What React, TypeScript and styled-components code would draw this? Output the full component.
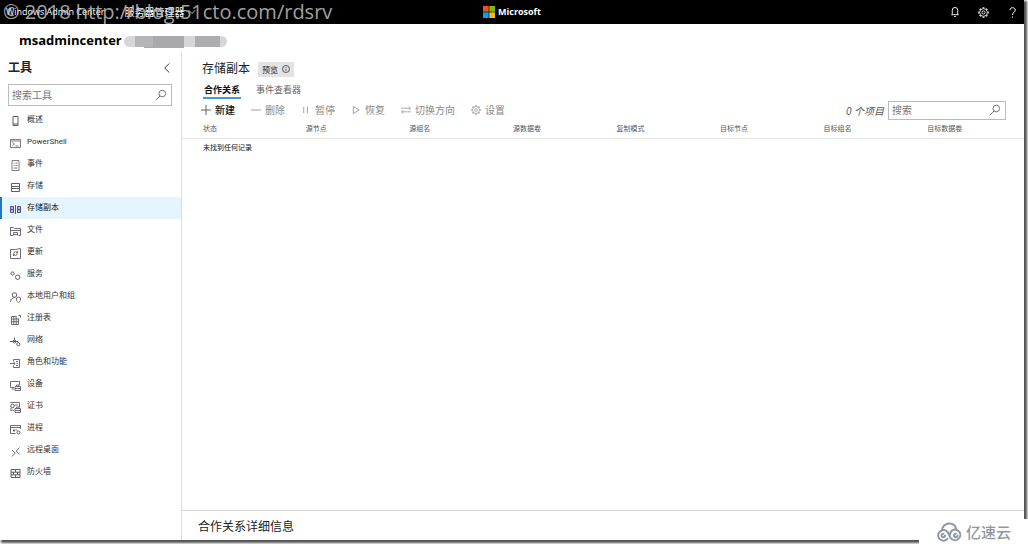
import React from "react";
import styled, { createGlobalStyle, css } from "styled-components";

const GlobalStyle = createGlobalStyle`
  * { box-sizing: border-box; }
  body {
    margin: 0;
    background: #fff;
    color: #222;
    font-family: "Open Sans", "Noto Sans CJK SC", sans-serif;
    font-size: 10px;
  }
  button, input { font: inherit; color: inherit; }
  button { background: none; border: 0; padding: 0; }
  svg { display: block; flex: none; }
`;

const Window = styled.div`
  display: flex;
  flex-direction: column;
  min-height: calc(100vh - 4px);
  margin: 0 4px 4px 0;
  background: #fff;
  box-shadow: 2px 2px 2px 1px #555;
`;

const TopBar = styled.header`
  display: grid;
  grid-template-columns: 1fr auto 1fr;
  align-items: center;
  height: 24px;
  padding: 0 6px;
  background: #000;
  color: #fff;
`;

const Product = styled.div`
  display: flex;
  align-items: center;
  gap: 20px;
  font-size: 9px;
  line-height: 16px;
  white-space: nowrap;
`;

const Module = styled.span`
  display: flex;
  align-items: center;
  gap: 4px;
  font-size: 10px;
`;

const Brand = styled.div`
  display: flex;
  align-items: center;
  gap: 3px;
  font-size: 9px;
  font-weight: 700;
  line-height: 14px;
`;

const TopActions = styled.div`
  display: flex;
  justify-content: flex-end;
  align-items: center;
  gap: 18px;
`;

const IconButton = styled.button`
  display: flex;
`;

const Connection = styled.div`
  display: flex;
  align-items: center;
  height: 29px;
  padding: 4px 0 0 19px;
`;

const ServerName = styled.h1`
  margin: 0;
  padding-bottom: 2px;
  font-size: 13px;
  line-height: 18px;
  font-weight: 700;
  color: #000;
`;

const Redaction = styled.svg`
  margin: 2px 0 0 2px;
`;

const Body = styled.div`
  display: flex;
  flex: 1;
`;

const Sidebar = styled.aside`
  flex: none;
  width: 182px;
  border-right: 1px solid #ddd;
`;

const SidebarHeader = styled.div`
  display: flex;
  align-items: center;
  justify-content: space-between;
  height: 28px;
  padding: 2px 9px 0 8px;
`;

const SidebarTitle = styled.h2`
  margin: 0;
  font-size: 12px;
  font-weight: 700;
  line-height: 16px;
`;

const SearchBox = styled.label<{ $wide?: boolean }>`
  display: flex;
  align-items: center;
  height: ${(p) => (p.$wide ? 22 : 19)}px;
  width: ${(p) => (p.$wide ? "auto" : "118px")};
  margin: ${(p) => (p.$wide ? "3px 9px 3px 8px" : "0")};
  padding: 0 4px 0 3px;
  border: 1px solid #bbb;
  color: #666;
`;

const SearchInput = styled.input`
  flex: 1;
  min-width: 0;
  padding: 0;
  border: 0;
  outline: 0;
  background: none;
  font-size: 10px;
  &::placeholder { color: #777; opacity: 1; }
`;

const NavList = styled.ul`
  margin: 0;
  padding: 0;
  list-style: none;
`;

const NavLink = styled.a<{ $active?: boolean }>`
  display: flex;
  align-items: center;
  gap: 6px;
  height: 22px;
  padding-left: 8px;
  border-left: 2px solid ${(p) => (p.$active ? "#1f77c9" : "transparent")};
  background: ${(p) => (p.$active ? "#e5f5fe" : "none")};
  color: ${(p) => (p.$active ? "#111" : "#333")};
  font-family: Roboto, "Noto Sans CJK SC", sans-serif;
  font-size: 8px;
  line-height: 12px;
  text-decoration: none;
  svg { margin-top: 2px; color: ${(p) => (p.$active ? "#5b4f86" : "#625a66")}; }
`;

const Main = styled.main`
  display: flex;
  flex: 1;
  flex-direction: column;
  min-width: 0;
`;

const TitleRow = styled.div`
  display: flex;
  align-items: center;
  gap: 8px;
  padding: 7px 20px 0;
`;

const Title = styled.h2`
  margin: 0;
  font-size: 12px;
  font-weight: 400;
  line-height: 18px;
`;

const Badge = styled.span`
  display: flex;
  align-items: center;
  gap: 4px;
  height: 15px;
  padding: 0 4px;
  background: #e3e3e3;
  font-size: 8px;
`;

const Tabs = styled.div`
  display: flex;
  gap: 14px;
  padding: 5px 21px 0;
`;

const Tab = styled.button<{ $active?: boolean }>`
  padding: 0 1px;
  font-size: 9px;
  line-height: 14px;
  color: #666;
  border-bottom: 2px solid transparent;
  ${(p) =>
    p.$active &&
    css`
      color: #111;
      font-weight: 700;
      border-color: #4a97d6;
    `}
`;

const Toolbar = styled.div`
  display: flex;
  align-items: center;
  gap: 16px;
  height: 22px;
  padding: 0 18px 0 19px;
`;

const Command = styled.button<{ $enabled?: boolean }>`
  display: flex;
  align-items: center;
  gap: 4px;
  line-height: 16px;
  white-space: nowrap;
  color: ${(p) => (p.$enabled ? "#111" : "#8a8a8a")};
  font-weight: ${(p) => (p.$enabled ? 500 : 400)};
  svg { color: ${(p) => (p.$enabled ? "#555" : "#999")}; }
`;

const Finder = styled.div`
  display: flex;
  align-items: center;
  gap: 4px;
  margin-left: auto;
`;

const Count = styled.span`
  font-style: italic;
  color: #555;
`;

const Table = styled.table`
  width: 100%;
  table-layout: fixed;
  border-collapse: collapse;
  font-size: 7px;
  line-height: 10px;
  text-align: left;
`;

const Col = styled.col<{ $first?: boolean; $last?: boolean }>`
  width: ${(p) => (p.$first ? "14.7%" : p.$last ? "auto" : "12.3%")};
`;

const Th = styled.th`
  height: 17px;
  padding: 0;
  border-bottom: 1px solid #e6e6e6;
  font-weight: 400;
  color: #555;
  white-space: nowrap;
  &:first-child { padding-left: 21px; }
`;

const Td = styled.td`
  height: 20px;
  padding: 0 0 0 21px;
  color: #111;
`;

const Details = styled.section`
  margin-top: auto;
  padding: 7px 16px 4px;
  border-top: 1px solid #d6d6d6;
`;

const DetailsTitle = styled.h3`
  margin: 0;
  font-size: 12px;
  font-weight: 400;
  line-height: 18px;
`;

const Watermark = styled.div`
  position: absolute;
  top: 0;
  left: 3px;
  font-family: "Open Sans", sans-serif;
  font-size: 20px;
  line-height: 24px;
  white-space: nowrap;
  color: rgba(205, 205, 205, 0.8);
  pointer-events: none;
`;

const HostMark = styled.div`
  position: fixed;
  right: 0;
  bottom: 0;
  display: flex;
  align-items: center;
  gap: 3px;
  width: 109px;
  height: 25px;
  padding-left: 18px;
  background: #fff;
  color: #8f97a3;
  font-size: 15px;
  font-weight: 500;
  line-height: 24px;
`;

type IconProps = { children: React.ReactNode; size?: number; view?: number; weight?: number };

const Icon = ({ children, size = 11, view = 11, weight = 1 }: IconProps) => (
  <svg width={size} height={size} viewBox={`0 0 ${view} ${view}`} fill="none" stroke="currentColor" strokeWidth={weight} aria-hidden="true">
    {children}
  </svg>
);

const SearchIcon = () => (
  <Icon size={12} view={12} weight={0.9}>
    <circle cx="7.3" cy="4.5" r="3.3" />
    <path d="M5 7 .8 11.2" />
  </Icon>
);

const gearAngles = [0, 45, 90, 135, 180, 225, 270, 315];

const GearIcon = ({ size = 11 }: { size?: number }) => (
  <Icon size={size} view={12} weight={0.9}>
    <circle cx="6" cy="6" r="4.2" />
    <circle cx="6" cy="6" r="1.7" />
    {gearAngles.map((a) => (
      <path key={a} d="M6 1.500V.3" strokeWidth="2" transform={`rotate(${a} 6 6)`} />
    ))}
  </Icon>
);

const tools: { name: string; active?: boolean; icon: React.ReactNode }[] = [
  { name: "概述", icon: <path d="M3 .5h5v9H3zM3 8h5" /> },
  { name: "PowerShell", icon: <path d="M.5 1.500h10v8H.5zM.5 3h10M2.500 4.500l2 1.500-2 1.500M5.500 8h3" strokeWidth=".8" /> },
  { name: "事件", icon: <path d="M2 .5h7v10H2zM3.500 3h1M5.500 3h2M3.500 5.500h1M5.500 5.500h2M3.500 8h4" strokeWidth=".8" /> },
  { name: "存储", icon: <path d="M1.500 1.500h8v8h-8zM1.500 4.500h8M1.500 6.500h8" /> },
  {
    name: "存储副本",
    active: true,
    icon: <path d="M.5 2.500h3v6h-3zM7.500 2.500h3v6h-3zM.5 5.500h3M7.500 5.500h3M5.500 1v9" fill="#b9b2da" />,
  },
  { name: "文件", icon: <path d="M3 9.500H.5v-8h3l1 1h6v7H8.500M.5 4.500h10M3.500 9.500v-3h4v3M3.500 8.500h4" strokeWidth=".9" /> },
  {
    name: "更新",
    icon: <path d="M.5 1.500h5L10.500.5v10h-10zM7.500 3v1.800H6M3.500 8V6.300H5M3.500 5.500c.5-2 3-2.200 4-.7M7.500 5.800c-.5 1.900-3 2-4 .5" strokeWidth=".9" />,
  },
  {
    name: "服务",
    icon: (
      <>
        <circle cx="2.500" cy="3.500" r="1.600" />
        <circle cx="7.700" cy="7.200" r="2.200" />
      </>
    ),
  },
  {
    name: "本地用户和组",
    icon: (
      <>
        <circle cx="4.500" cy="3" r="2.300" />
        <path d="M.5 10c0-3 2-4.500 4.500-4.500M6.500 6l2-1 2 1v2c0 1-1 2-2 2.500-1-.5-2-1.500-2-2.500z" strokeWidth=".9" />
      </>
    ),
  },
  { name: "注册表", icon: <path d="M1.500 2.500h5M1.500 2.500v8h7v-6M1.500 5h7M1.500 7.700h7M3.800 2.500v8M6.200 2.500v8M8.500 1.500h2v2" strokeWidth=".9" /> },
  {
    name: "网络",
    icon: (
      <>
        <path d="M0 5.500h8M4.500 1.500v3M4.500 3.500l2 2-2 1.500-2-1.500z" />
        <circle cx="8.300" cy="8.300" r="1.600" />
      </>
    ),
  },
  { name: "角色和功能", icon: <path d="M3.500 3.500v-2h6v8h-6v-2M0 5.500h5M3.500 4l1.700 1.500L3.500 7M6 3.500h2M6.500 5.500H8M6 7.500h2" strokeWidth=".9" /> },
  { name: "设备", icon: <path d="M4 7.500H.5v-6h9V5M1.500 9H4M5 6.500h5.500v4H5zM5 8.500h5.500M6.500 6.500V5h2.500v1.500" strokeWidth=".9" /> },
  {
    name: "证书",
    icon: (
      <>
        <path d="M.5 1V.5h9V5M1 6v3l1.500-1L4 9M5 6.500h5.500v4H5zM5 8.500h5.500M6.500 6.500V5h2.500v1.500M5 3h3" strokeWidth=".9" />
        <circle cx="2.500" cy="4" r="1.800" />
      </>
    ),
  },
  {
    name: "进程",
    icon: (
      <>
        <path d="M5.500 9.500h-5v-8h10V5M.5 3.500h10M4 5v3M5.500 6h2M3 6.500h2" strokeWidth=".9" />
        <circle cx="8.500" cy="8.500" r="1.500" />
      </>
    ),
  },
  { name: "远程桌面", icon: <path d="M2 4l3.200 3L2 10.500M9.500 1.500 6 5.200l3.500 3" strokeWidth=".9" /> },
  { name: "防火墙", icon: <path d="M1 1.500h9v8H1zM1 4.200h9M1 6.800h9M5.500 1.500v2.500M3.500 4v3M7.500 4v3M5.500 7v2.500" /> },
];

const commands: { name: string; enabled?: boolean; icon: React.ReactNode }[] = [
  { name: "新建", enabled: true, icon: <Icon size={10}><path d="M0 5.500h11M5.500 0v11" /></Icon> },
  { name: "删除", icon: <Icon size={10}><path d="M0 5.500h11" /></Icon> },
  { name: "暂停", icon: <Icon size={10}><path d="M3 2v7M7 2v7" /></Icon> },
  { name: "恢复", icon: <Icon size={10}><path d="M2.500 1.500 9 5.500l-6.500 4z" /></Icon> },
  { name: "切换方向", icon: <Icon size={10}><path d="M0 3.500h10.500M8.500 1.500l2 2-2 2M11 7.500H.5M2.500 5.500l-2 2 2 2" strokeWidth=".9" /></Icon> },
  { name: "设置", icon: <GearIcon size={10} /> },
];

const columns = ["状态", "源节点", "源组名", "源数据卷", "复制模式", "目标节点", "目标组名", "目标数据卷"];

export default function App() {
  return (
    <>
      <GlobalStyle />
      <Window>
        <TopBar>
          <Product>
            <span>Windows Admin Center</span>
            <Module>
              服务器管理器
              <Icon size={8}><path d="m1 3 4.500 4.500L10 3" /></Icon>
            </Module>
          </Product>
          <Brand>
            <svg width="12" height="12" viewBox="0 0 12 12" aria-hidden="true">
              <path fill="#f25022" d="M0 0h5.700v5.700H0z" />
              <path fill="#7fba00" d="M6.300 0H12v5.700H6.300z" />
              <path fill="#00a4ef" d="M0 6.300h5.700V12H0z" />
              <path fill="#ffb900" d="M6.300 6.300H12V12H6.300z" />
            </svg>
            Microsoft
          </Brand>
          <TopActions>
            <IconButton aria-label="通知">
              <Icon size={10}><path d="M1.500 8.500h8M2.500 8.500v-5a3 3 0 0 1 6 0v5M4.500 10.500h2" /></Icon>
            </IconButton>
            <IconButton aria-label="设置"><GearIcon size={11} /></IconButton>
            <IconButton aria-label="帮助">
              <Icon size={11}><path d="M3 3.200C3 1.500 4 .7 5.500.7S8.300 1.600 8.300 3c0 2-2.800 2.200-2.800 5M5.500 9.500v1.200" /></Icon>
            </IconButton>
          </TopActions>
        </TopBar>

        <Connection>
          <ServerName>msadmincenter</ServerName>
          <Redaction width="104" height="13" viewBox="0 0 104 13" aria-hidden="true">
            <rect y="1" width="103" height="11" rx="5.500" fill="#d6d6d8" />
            <path fill="#a9a9ab" d="M11 1h49v12H20v-1h-9z" />
            <path fill="#b5b5b7" d="M11 1h18v11H11z" />
            <path fill="#adadaf" d="M71 1h25v11H71z" />
          </Redaction>
        </Connection>

        <Body>
          <Sidebar>
            <SidebarHeader>
              <SidebarTitle>工具</SidebarTitle>
              <IconButton aria-label="折叠">
                <Icon size={10}><path d="M8 .5 3 5.500l5 5" /></Icon>
              </IconButton>
            </SidebarHeader>
            <SearchBox $wide>
              <SearchInput aria-label="搜索工具" placeholder="搜索工具" />
              <SearchIcon />
            </SearchBox>
            <nav>
              <NavList>
                {tools.map((tool) => (
                  <li key={tool.name}>
                    <NavLink href="#" $active={tool.active}>
                      <Icon>{tool.icon}</Icon>
                      {tool.name}
                    </NavLink>
                  </li>
                ))}
              </NavList>
            </nav>
          </Sidebar>

          <Main>
            <TitleRow>
              <Title>存储副本</Title>
              <Badge>
                预览
                <Icon size={8}>
                  <circle cx="5.500" cy="5.500" r="4.800" />
                  <path d="M5.500 5v3M5.500 3v1" />
                </Icon>
              </Badge>
            </TitleRow>
            <Tabs>
              <Tab $active>合作关系</Tab>
              <Tab>事件查看器</Tab>
            </Tabs>
            <Toolbar>
              {commands.map((c) => (
                <Command key={c.name} $enabled={c.enabled} disabled={!c.enabled}>
                  {c.icon}
                  {c.name}
                </Command>
              ))}
              <Finder>
                <Count>0 个项目</Count>
                <SearchBox>
                  <SearchInput aria-label="搜索" placeholder="搜索" />
                  <SearchIcon />
                </SearchBox>
              </Finder>
            </Toolbar>
            <Table>
              <colgroup>
                {columns.map((c, i) => (
                  <Col key={c} $first={i === 0} $last={i === columns.length - 1} />
                ))}
              </colgroup>
              <thead>
                <tr>
                  {columns.map((c) => (
                    <Th key={c}>{c}</Th>
                  ))}
                </tr>
              </thead>
              <tbody>
                <tr>
                  <Td colSpan={8}>未找到任何记录</Td>
                </tr>
              </tbody>
            </Table>
            <Details>
              <DetailsTitle>合作关系详细信息</DetailsTitle>
            </Details>
          </Main>
        </Body>
      </Window>
      <Watermark>© 2018 http://blog.51cto.com/rdsrv</Watermark>
      <HostMark>
        <svg width="26" height="20" viewBox="0 0 26 20" fill="none" stroke="currentColor" strokeWidth="2" strokeLinecap="round" aria-hidden="true">
          <path d="M4.800 8.500C5.200 4.500 8.300 1.500 12.300 1.500c3.600 0 6.400 2.300 7 5.800" />
          <path d="M8 13.500a1.700 1.700 0 1 1-1.700-1.700M10.500 16.800a5.300 5.300 0 1 1 .2-6.600c1.300 1.800 1.800 4 3 5.800a5.300 5.300 0 1 0 1.500-7.600c-1.500 1-2 2.600-2.700 4.600" />
          <path d="M20.500 13.500a1.700 1.700 0 1 1-1.700-1.700" />
        </svg>
        亿速云
      </HostMark>
    </>
  );
}
